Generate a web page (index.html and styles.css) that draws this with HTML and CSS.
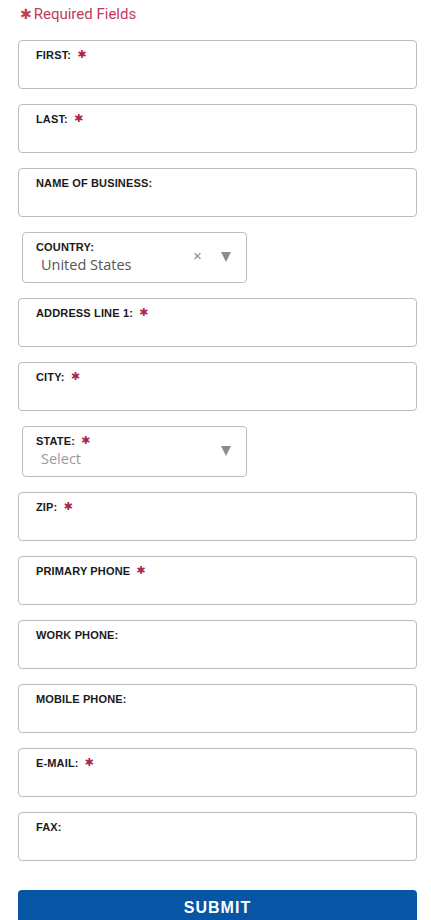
FILE: index.html
```html
<!DOCTYPE html>
<html lang="en">
<head>
<meta charset="utf-8">
<title>Form</title>
<link rel="stylesheet" href="styles.css">
</head>
<body>
<div class="page">
  <p class="required-note"><span class="star big">✱</span>Required Fields</p>
  <form class="form">
    <label class="field"><span class="label">FIRST:<span class="star">✱</span></span><input class="input" type="text"></label>
    <label class="field"><span class="label">LAST:<span class="star">✱</span></span><input class="input" type="text"></label>
    <label class="field"><span class="label">NAME OF BUSINESS:</span><input class="input" type="text"></label>
    <div class="select">
      <span class="label">COUNTRY:</span>
      <span class="value">United States</span>
      <span class="clear">×</span>
      <span class="arrow"></span>
    </div>
    <label class="field"><span class="label">ADDRESS LINE 1:<span class="star">✱</span></span><input class="input" type="text"></label>
    <label class="field"><span class="label">CITY:<span class="star">✱</span></span><input class="input" type="text"></label>
    <div class="select">
      <span class="label">STATE:<span class="star">✱</span></span>
      <span class="value placeholder">Select</span>
      <span class="arrow"></span>
    </div>
    <label class="field"><span class="label">ZIP:<span class="star">✱</span></span><input class="input" type="text"></label>
    <label class="field"><span class="label">PRIMARY PHONE<span class="star">✱</span></span><input class="input" type="text"></label>
    <label class="field"><span class="label">WORK PHONE:</span><input class="input" type="text"></label>
    <label class="field"><span class="label">MOBILE PHONE:</span><input class="input" type="text"></label>
    <label class="field"><span class="label">E-MAIL:<span class="star">✱</span></span><input class="input" type="text"></label>
    <label class="field"><span class="label">FAX:</span><input class="input" type="text"></label>
    <button class="submit" type="button">SUBMIT</button>
  </form>
</div>
</body>
</html>
```
FILE: styles.css
```css
* { box-sizing: border-box; }
html, body { margin: 0; padding: 0; background: #fff; }
body { font-family: "Liberation Sans", Arial, sans-serif; }
.page { padding: 0 14px 0 18px; }
.required-note {
  margin: 0;
  height: 40px;
  padding-top: 5px;
  padding-left: 2px;
  font-family: Roboto, "Liberation Sans", sans-serif;
  font-size: 15px;
  line-height: 18px;
  color: #c23a57;
}
.star {
  font-family: "DejaVu Sans", sans-serif;
  color: #a8264f;
  font-size: 11px;
  margin-left: 6px;
  vertical-align: 1px;
}
.star.big {
  font-size: 14px;
  margin-left: 0;
  margin-right: 2px;
  color: #c23a57;
  vertical-align: 0;
}
.form { display: flex; flex-direction: column; gap: 15px; }
.field {
  display: flex;
  flex-direction: column;
  height: 49px;
  border: 1px solid #bdbdbd;
  border-radius: 4px;
  padding: 7px 17px 0;
}
.label {
  font-size: 11px;
  font-weight: bold;
  color: #1a1a1a;
  line-height: 14px;
  letter-spacing: 0.15px;
}
.input {
  border: 0;
  outline: 0;
  padding: 0;
  height: 20px;
  background: transparent;
  font-size: 14px;
}
.select {
  position: relative;
  width: 225px;
  height: 51px;
  margin-left: 4px;
  border: 1px solid #bdbdbd;
  border-radius: 4px;
  padding: 7px 13px 0;
  display: flex;
  flex-direction: column;
}
.value {
  font-family: "Open Sans", "Noto Sans", sans-serif;
  font-size: 14.5px;
  line-height: 20px;
  color: #555;
  padding-left: 5px;
  margin-top: 1px;
}
.value.placeholder { color: #9a9a9a; }
.clear {
  position: absolute;
  left: 170px;
  top: 14px;
  font-size: 15px;
  color: #8a8a8a;
  line-height: 18px;
}
.arrow {
  position: absolute;
  left: 198px;
  top: 19px;
  width: 0;
  height: 0;
  border-left: 5.5px solid transparent;
  border-right: 5.5px solid transparent;
  border-top: 10px solid #8c8c8c;
}
.submit {
  margin-top: 14px;
  height: 38px;
  border: 0;
  border-radius: 4px;
  background: #0755a5;
  color: #fff;
  font-family: "Liberation Sans", Arial, sans-serif;
  font-weight: bold;
  font-size: 16px;
  letter-spacing: 1px;
  padding: 0 0 2px;
  line-height: 34px;
  text-align: center;
}
```
